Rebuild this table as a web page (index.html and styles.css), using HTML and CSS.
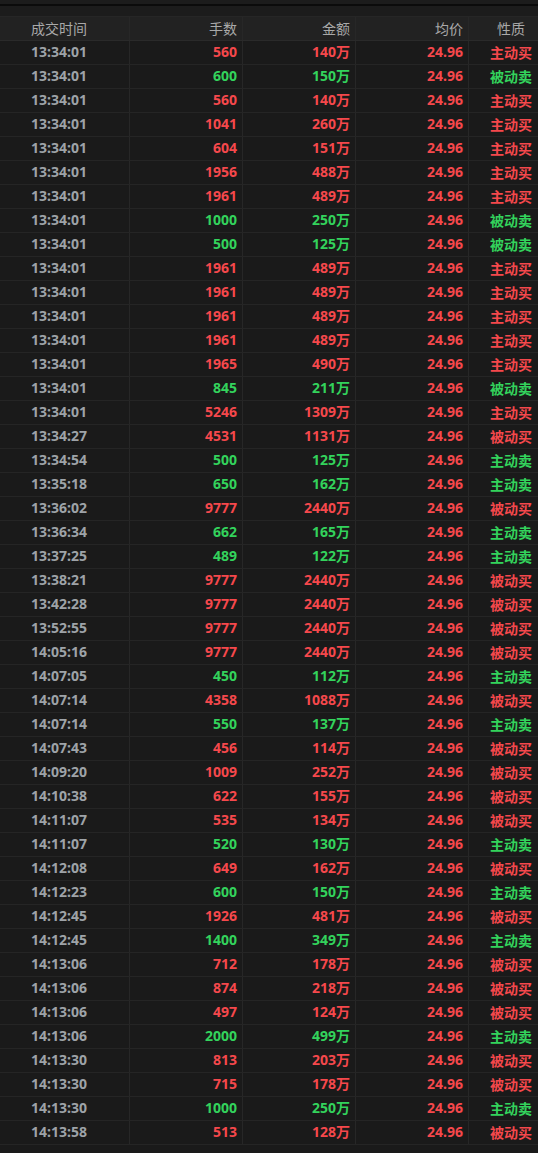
FILE: index.html
```html
<!DOCTYPE html>
<html lang="zh">
<head>
<meta charset="utf-8">
<title>成交明细</title>
<link rel="stylesheet" href="styles.css">
</head>
<body>
<div class="topbar"></div>
<div class="spacer"></div>
<div class="table">
  <div class="row head">
    <div class="c time">成交时间</div><div class="c num">手数</div><div class="c num">金额</div><div class="c num">均价</div><div class="c kind">性质</div>
  </div>
  <div class="row r"><div class="c time">13:34:01</div><div class="c num">560</div><div class="c num">140万</div><div class="c num p">24.96</div><div class="c kind">主动买</div></div>
  <div class="row g"><div class="c time">13:34:01</div><div class="c num">600</div><div class="c num">150万</div><div class="c num p">24.96</div><div class="c kind">被动卖</div></div>
  <div class="row r"><div class="c time">13:34:01</div><div class="c num">560</div><div class="c num">140万</div><div class="c num p">24.96</div><div class="c kind">主动买</div></div>
  <div class="row r"><div class="c time">13:34:01</div><div class="c num">1041</div><div class="c num">260万</div><div class="c num p">24.96</div><div class="c kind">主动买</div></div>
  <div class="row r"><div class="c time">13:34:01</div><div class="c num">604</div><div class="c num">151万</div><div class="c num p">24.96</div><div class="c kind">主动买</div></div>
  <div class="row r"><div class="c time">13:34:01</div><div class="c num">1956</div><div class="c num">488万</div><div class="c num p">24.96</div><div class="c kind">主动买</div></div>
  <div class="row r"><div class="c time">13:34:01</div><div class="c num">1961</div><div class="c num">489万</div><div class="c num p">24.96</div><div class="c kind">主动买</div></div>
  <div class="row g"><div class="c time">13:34:01</div><div class="c num">1000</div><div class="c num">250万</div><div class="c num p">24.96</div><div class="c kind">被动卖</div></div>
  <div class="row g"><div class="c time">13:34:01</div><div class="c num">500</div><div class="c num">125万</div><div class="c num p">24.96</div><div class="c kind">被动卖</div></div>
  <div class="row r"><div class="c time">13:34:01</div><div class="c num">1961</div><div class="c num">489万</div><div class="c num p">24.96</div><div class="c kind">主动买</div></div>
  <div class="row r"><div class="c time">13:34:01</div><div class="c num">1961</div><div class="c num">489万</div><div class="c num p">24.96</div><div class="c kind">主动买</div></div>
  <div class="row r"><div class="c time">13:34:01</div><div class="c num">1961</div><div class="c num">489万</div><div class="c num p">24.96</div><div class="c kind">主动买</div></div>
  <div class="row r"><div class="c time">13:34:01</div><div class="c num">1961</div><div class="c num">489万</div><div class="c num p">24.96</div><div class="c kind">主动买</div></div>
  <div class="row r"><div class="c time">13:34:01</div><div class="c num">1965</div><div class="c num">490万</div><div class="c num p">24.96</div><div class="c kind">主动买</div></div>
  <div class="row g"><div class="c time">13:34:01</div><div class="c num">845</div><div class="c num">211万</div><div class="c num p">24.96</div><div class="c kind">被动卖</div></div>
  <div class="row r"><div class="c time">13:34:01</div><div class="c num">5246</div><div class="c num">1309万</div><div class="c num p">24.96</div><div class="c kind">主动买</div></div>
  <div class="row r"><div class="c time">13:34:27</div><div class="c num">4531</div><div class="c num">1131万</div><div class="c num p">24.96</div><div class="c kind">被动买</div></div>
  <div class="row g"><div class="c time">13:34:54</div><div class="c num">500</div><div class="c num">125万</div><div class="c num p">24.96</div><div class="c kind">主动卖</div></div>
  <div class="row g"><div class="c time">13:35:18</div><div class="c num">650</div><div class="c num">162万</div><div class="c num p">24.96</div><div class="c kind">主动卖</div></div>
  <div class="row r"><div class="c time">13:36:02</div><div class="c num">9777</div><div class="c num">2440万</div><div class="c num p">24.96</div><div class="c kind">被动买</div></div>
  <div class="row g"><div class="c time">13:36:34</div><div class="c num">662</div><div class="c num">165万</div><div class="c num p">24.96</div><div class="c kind">主动卖</div></div>
  <div class="row g"><div class="c time">13:37:25</div><div class="c num">489</div><div class="c num">122万</div><div class="c num p">24.96</div><div class="c kind">主动卖</div></div>
  <div class="row r"><div class="c time">13:38:21</div><div class="c num">9777</div><div class="c num">2440万</div><div class="c num p">24.96</div><div class="c kind">被动买</div></div>
  <div class="row r"><div class="c time">13:42:28</div><div class="c num">9777</div><div class="c num">2440万</div><div class="c num p">24.96</div><div class="c kind">被动买</div></div>
  <div class="row r"><div class="c time">13:52:55</div><div class="c num">9777</div><div class="c num">2440万</div><div class="c num p">24.96</div><div class="c kind">被动买</div></div>
  <div class="row r"><div class="c time">14:05:16</div><div class="c num">9777</div><div class="c num">2440万</div><div class="c num p">24.96</div><div class="c kind">被动买</div></div>
  <div class="row g"><div class="c time">14:07:05</div><div class="c num">450</div><div class="c num">112万</div><div class="c num p">24.96</div><div class="c kind">主动卖</div></div>
  <div class="row r"><div class="c time">14:07:14</div><div class="c num">4358</div><div class="c num">1088万</div><div class="c num p">24.96</div><div class="c kind">被动买</div></div>
  <div class="row g"><div class="c time">14:07:14</div><div class="c num">550</div><div class="c num">137万</div><div class="c num p">24.96</div><div class="c kind">主动卖</div></div>
  <div class="row r"><div class="c time">14:07:43</div><div class="c num">456</div><div class="c num">114万</div><div class="c num p">24.96</div><div class="c kind">被动买</div></div>
  <div class="row r"><div class="c time">14:09:20</div><div class="c num">1009</div><div class="c num">252万</div><div class="c num p">24.96</div><div class="c kind">被动买</div></div>
  <div class="row r"><div class="c time">14:10:38</div><div class="c num">622</div><div class="c num">155万</div><div class="c num p">24.96</div><div class="c kind">被动买</div></div>
  <div class="row r"><div class="c time">14:11:07</div><div class="c num">535</div><div class="c num">134万</div><div class="c num p">24.96</div><div class="c kind">被动买</div></div>
  <div class="row g"><div class="c time">14:11:07</div><div class="c num">520</div><div class="c num">130万</div><div class="c num p">24.96</div><div class="c kind">主动卖</div></div>
  <div class="row r"><div class="c time">14:12:08</div><div class="c num">649</div><div class="c num">162万</div><div class="c num p">24.96</div><div class="c kind">被动买</div></div>
  <div class="row g"><div class="c time">14:12:23</div><div class="c num">600</div><div class="c num">150万</div><div class="c num p">24.96</div><div class="c kind">主动卖</div></div>
  <div class="row r"><div class="c time">14:12:45</div><div class="c num">1926</div><div class="c num">481万</div><div class="c num p">24.96</div><div class="c kind">被动买</div></div>
  <div class="row g"><div class="c time">14:12:45</div><div class="c num">1400</div><div class="c num">349万</div><div class="c num p">24.96</div><div class="c kind">主动卖</div></div>
  <div class="row r"><div class="c time">14:13:06</div><div class="c num">712</div><div class="c num">178万</div><div class="c num p">24.96</div><div class="c kind">被动买</div></div>
  <div class="row r"><div class="c time">14:13:06</div><div class="c num">874</div><div class="c num">218万</div><div class="c num p">24.96</div><div class="c kind">被动买</div></div>
  <div class="row r"><div class="c time">14:13:06</div><div class="c num">497</div><div class="c num">124万</div><div class="c num p">24.96</div><div class="c kind">被动买</div></div>
  <div class="row g"><div class="c time">14:13:06</div><div class="c num">2000</div><div class="c num">499万</div><div class="c num p">24.96</div><div class="c kind">主动卖</div></div>
  <div class="row r"><div class="c time">14:13:30</div><div class="c num">813</div><div class="c num">203万</div><div class="c num p">24.96</div><div class="c kind">被动买</div></div>
  <div class="row r"><div class="c time">14:13:30</div><div class="c num">715</div><div class="c num">178万</div><div class="c num p">24.96</div><div class="c kind">被动买</div></div>
  <div class="row g"><div class="c time">14:13:30</div><div class="c num">1000</div><div class="c num">250万</div><div class="c num p">24.96</div><div class="c kind">主动卖</div></div>
  <div class="row r"><div class="c time">14:13:58</div><div class="c num">513</div><div class="c num">128万</div><div class="c num p">24.96</div><div class="c kind">被动买</div></div>
</div>
</body>
</html>
```

FILE: styles.css
```css
html, body {
  margin: 0;
  padding: 0;
  background: #1a1a1a;
}
body {
  font-family: "Noto Sans", "Noto Sans CJK SC", sans-serif;
  font-size: 14px;
  width: 538px;
  overflow: hidden;
}
.topbar {
  height: 4px;
  background: #1c1c1c;
  border-bottom: 2px solid #0b0b0b;
}
.spacer {
  height: 10px;
  background: #1c1c1c;
}
.table {
  display: flex;
  flex-direction: column;
}
.row {
  display: grid;
  grid-template-columns: 130px 113px 113px 113px 69px;
  height: 23px;
  border-bottom: 1px solid #252525;
  background: #1a1a1a;
}
.row.head {
  background: #222222;
  border-top: 1px solid #262626;
  height: 23px;
  border-bottom: 1px solid #2a2a2a;
}
.c {
  display: flex;
  align-items: center;
  border-right: 1px solid #272727;
  font-weight: 700;
  white-space: nowrap;
  line-height: 1;
  padding-bottom: 1px;
}
.c:last-child {
  border-right: none;
}
.time {
  padding-left: 31px;
  color: #9ea3a8;
}
.num {
  justify-content: flex-end;
  padding-right: 5px;
}
.kind {
  justify-content: center;
  padding-left: 15px;
  font-family: "Noto Sans CJK SC", sans-serif;
  font-weight: 700;
}
.head .c {
  font-family: "Noto Sans CJK SC", sans-serif;
  font-weight: 400;
  color: #a9a9a9;
}
.r .num, .r .kind { color: #f5484c; }
.g .num, .g .kind { color: #33d35c; }
.row .num.p { color: #f5484c; }
```
